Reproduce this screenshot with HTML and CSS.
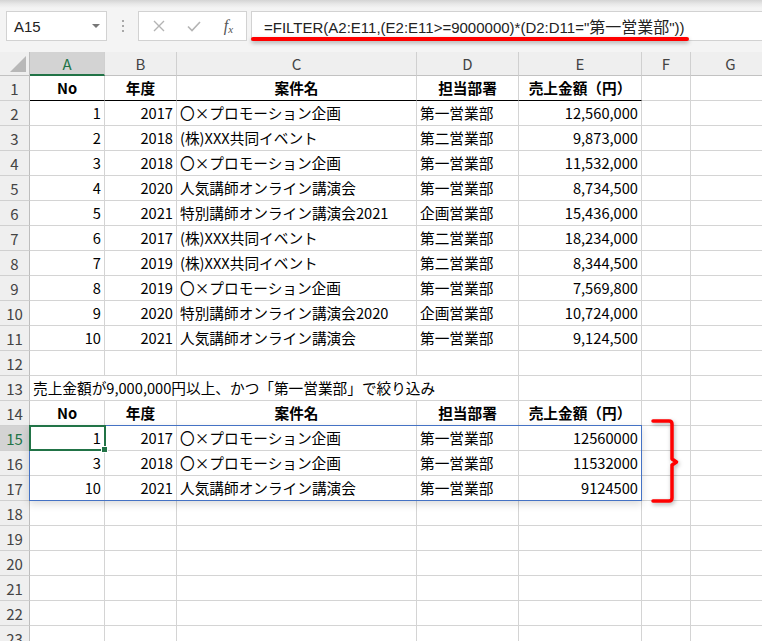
FILE: index.html
```html
<!DOCTYPE html>
<html lang="ja">
<head>
<meta charset="utf-8">
<title>FILTER</title>
<link rel="stylesheet" href="styles.css">
</head>
<body>
<div class="app">
  <div class="fbar">
    <div class="namebox"><span class="ref">A15</span><span class="caret"></span></div>
    <div class="sep"><i></i><i></i><i></i></div>
    <div class="btns">
      <span class="slot"><svg width="12" height="12" viewBox="0 0 12 12"><path d="M1 1 L11 11 M11 1 L1 11" stroke="#b4b4b4" stroke-width="1.4" fill="none"/></svg></span>
      <span class="slot"><svg width="14" height="11" viewBox="0 0 14 11"><path d="M1 5.5 L5 9.5 L13 1" stroke="#b4b4b4" stroke-width="1.6" fill="none"/></svg></span>
      <span class="slot"><span class="fx">f<sub>x</sub></span></span>
    </div>
    <div class="formula"><span class="ftext">=FILTER(A2:E11,(E2:E11&gt;=9000000)*(D2:D11="<span class="jp">第一営業部</span>"))</span><div class="uline"></div></div>
  </div>

  <div class="sheet">
    <div class="row colhead">
      <div class="corner"><span class="tri"></span></div>
      <div class="ch sel">A</div><div class="ch">B</div><div class="ch">C</div><div class="ch">D</div><div class="ch">E</div><div class="ch">F</div><div class="ch">G</div>
    </div>

    <div class="row"><div class="rh">1</div><div class="hd bb">No</div><div class="hd bb">年度</div><div class="hd bb">案件名</div><div class="hd bb">担当部署</div><div class="hd bb">売上金額（円）</div><div></div><div></div></div>
    <div class="row"><div class="rh">2</div><div class="n">1</div><div class="n">2017</div><div>〇×プロモーション企画</div><div>第一営業部</div><div class="n">12,560,000</div><div></div><div></div></div>
    <div class="row"><div class="rh">3</div><div class="n">2</div><div class="n">2018</div><div>(株)XXX共同イベント</div><div>第二営業部</div><div class="n">9,873,000</div><div></div><div></div></div>
    <div class="row"><div class="rh">4</div><div class="n">3</div><div class="n">2018</div><div>〇×プロモーション企画</div><div>第一営業部</div><div class="n">11,532,000</div><div></div><div></div></div>
    <div class="row"><div class="rh">5</div><div class="n">4</div><div class="n">2020</div><div>人気講師オンライン講演会</div><div>第一営業部</div><div class="n">8,734,500</div><div></div><div></div></div>
    <div class="row"><div class="rh">6</div><div class="n">5</div><div class="n">2021</div><div>特別講師オンライン講演会2021</div><div>企画営業部</div><div class="n">15,436,000</div><div></div><div></div></div>
    <div class="row"><div class="rh">7</div><div class="n">6</div><div class="n">2017</div><div>(株)XXX共同イベント</div><div>第二営業部</div><div class="n">18,234,000</div><div></div><div></div></div>
    <div class="row"><div class="rh">8</div><div class="n">7</div><div class="n">2019</div><div>(株)XXX共同イベント</div><div>第二営業部</div><div class="n">8,344,500</div><div></div><div></div></div>
    <div class="row"><div class="rh">9</div><div class="n">8</div><div class="n">2019</div><div>〇×プロモーション企画</div><div>第一営業部</div><div class="n">7,569,800</div><div></div><div></div></div>
    <div class="row"><div class="rh">10</div><div class="n">9</div><div class="n">2020</div><div>特別講師オンライン講演会2020</div><div>企画営業部</div><div class="n">10,724,000</div><div></div><div></div></div>
    <div class="row"><div class="rh">11</div><div class="n">10</div><div class="n">2021</div><div>人気講師オンライン講演会</div><div>第一営業部</div><div class="n">9,124,500</div><div></div><div></div></div>
    <div class="row"><div class="rh">12</div><div></div><div></div><div></div><div></div><div></div><div></div><div></div></div>
    <div class="row"><div class="rh">13</div><div class="span4">売上金額が9,000,000円以上、かつ「第一営業部」で絞り込み</div><div></div><div></div><div></div></div>
    <div class="row"><div class="rh">14</div><div class="hd">No</div><div class="hd">年度</div><div class="hd">案件名</div><div class="hd">担当部署</div><div class="hd">売上金額（円）</div><div></div><div></div></div>
    <div class="row"><div class="rh rsel">15</div><div class="n">1</div><div class="n">2017</div><div>〇×プロモーション企画</div><div>第一営業部</div><div class="n">12560000</div><div></div><div></div></div>
    <div class="row"><div class="rh">16</div><div class="n">3</div><div class="n">2018</div><div>〇×プロモーション企画</div><div>第一営業部</div><div class="n">11532000</div><div></div><div></div></div>
    <div class="row"><div class="rh">17</div><div class="n">10</div><div class="n">2021</div><div>人気講師オンライン講演会</div><div>第一営業部</div><div class="n">9124500</div><div></div><div></div></div>
    <div class="row"><div class="rh">18</div><div></div><div></div><div></div><div></div><div></div><div></div><div></div></div>
    <div class="row"><div class="rh">19</div><div></div><div></div><div></div><div></div><div></div><div></div><div></div></div>
    <div class="row"><div class="rh">20</div><div></div><div></div><div></div><div></div><div></div><div></div><div></div></div>
    <div class="row"><div class="rh">21</div><div></div><div></div><div></div><div></div><div></div><div></div><div></div></div>
    <div class="row"><div class="rh">22</div><div></div><div></div><div></div><div></div><div></div><div></div><div></div></div>
    <div class="row"><div class="rh">23</div><div></div><div></div><div></div><div></div><div></div><div></div><div></div></div>

    <div class="spill"></div>
    <div class="selbox"></div>
    <div class="handle"></div>
    <svg class="brace" width="34" height="88" viewBox="0 0 34 88"><path d="M5 3 H21 Q24 3 24 6 V41 L28.5 44 L24 47 V80 Q24 83 21 83 H5" stroke="#f00" stroke-width="3.5" fill="none" stroke-linejoin="round" stroke-linecap="round"/></svg>
  </div>
</div>
</body>
</html>
```

FILE: styles.css
```css
* { box-sizing: border-box; margin: 0; padding: 0; }
html, body { width: 762px; height: 641px; overflow: hidden; background: #fff; }
body { font-family: "Noto Sans CJK JP", "Noto Sans", sans-serif; color: #000; }

.fbar {
  height: 52px;
  background: linear-gradient(#d4d4d4 0, #e8e8e8 4px, #f4f4f4 8px);
  display: flex;
  align-items: flex-start;
  padding-top: 11px;
}
.namebox {
  margin-left: 6px;
  width: 101px;
  height: 30px;
  background: #fff;
  border: 1px solid #d2d2d2;
  display: flex;
  align-items: center;
  justify-content: space-between;
  padding: 0 6px 0 7px;
  font-family: "Liberation Sans", sans-serif;
  font-size: 15px;
  color: #222;
}
.caret {
  width: 0; height: 0;
  border-left: 4px solid transparent;
  border-right: 4px solid transparent;
  border-top: 4px solid #777;
}
.sep {
  width: 31px; height: 30px;
  display: flex; flex-direction: column; align-items: center; justify-content: center; gap: 3px;
}
.sep i { display: block; width: 2px; height: 2px; background: #a8a8a8; }
.btns {
  width: 109px; height: 30px;
  background: #fff;
  border: 1px solid #d2d2d2;
  display: flex; align-items: center;
  padding-left: 2px;
}
.slot { width: 35px; display: flex; justify-content: center; align-items: center; }
.fx {
  font-family: "Liberation Serif", serif;
  font-style: italic;
  font-size: 16px;
  color: #555;
  line-height: 1;
}
.fx sub { font-size: 11px; vertical-align: -2px; }
.formula {
  position: relative;
  margin-left: 4px;
  flex: 1;
  margin-right: -2px;
  height: 30px;
  background: #fff;
  border: 1px solid #d2d2d2;
  display: flex; align-items: center;
  padding-left: 12px;
  font-family: "Liberation Sans", "Noto Sans CJK JP", sans-serif;
  font-size: 15px;
  color: #222;
  white-space: nowrap;
}
.formula .jp { font-family: "Noto Sans CJK JP", sans-serif; font-size: 16px; }
.uline {
  position: absolute;
  left: -1px; top: 25px;
  width: 438px; height: 4px;
  background: #ff0000;
  border-radius: 2px;
  box-shadow: 0 2px 4px rgba(0,0,0,.3);
}

.sheet { position: relative; height: 589px; overflow: hidden; }
.row {
  display: grid;
  grid-template-columns: 30px 75px 72px 240px 102px 123px 49px 80px;
  height: 25px;
}
.row > div {
  border-right: 1px solid #d4d4d4;
  border-bottom: 1px solid #d4d4d4;
  display: flex; align-items: center;
  padding: 0 3px;
  white-space: nowrap;
  overflow: hidden;
  font-size: 14.67px;
  line-height: 1;
}
.row > .n { justify-content: flex-end; }
.row > .hd { justify-content: center; font-weight: bold; }
.row > .bb { border-bottom-color: #000; }
.row > .span4 { grid-column: span 4; overflow: visible; }

.colhead { height: 24px; }
.row > .ch, .row > .corner {
  background: #efefef;
  justify-content: center;
  font-size: 15px;
  color: #444;
  border-right-color: #d0d0d0;
  border-bottom-color: #c2c2c2;
}
.row > .ch.sel {
  background: #d3d3d3;
  color: #217346;
  border-bottom: 2px solid #217346;
}
.row > .corner { position: relative; border-right-color: #bdbdbd; }
.tri {
  position: absolute; right: 3px; bottom: 3px;
  width: 0; height: 0;
  border-left: 16px solid transparent;
  border-bottom: 16px solid #b8b8b8;
}
.row > .rh {
  background: #efefef;
  justify-content: center;
  font-size: 15px;
  color: #444;
  padding: 0;
  border-right-color: #bdbdbd;
  border-bottom-color: #d0d0d0;
}
.row > .rh.rsel { background: #d3d3d3; color: #217346; }

.spill {
  position: absolute;
  left: 29px; top: 373px;
  width: 613px; height: 76px;
  border: 1px solid #4472c4;
  box-shadow: 0 3px 8px rgba(0,0,0,.15);
}
.selbox {
  position: absolute;
  left: 29px; top: 373px;
  width: 77px; height: 26px;
  border: 2px solid #217346;
}
.handle {
  position: absolute;
  left: 101px; top: 394px;
  width: 7px; height: 7px;
  background: #217346;
  border: 1px solid #fff;
}
.brace {
  position: absolute;
  left: 648px; top: 366px;
  filter: drop-shadow(1px 2px 2px rgba(0,0,0,.3));
}
```
